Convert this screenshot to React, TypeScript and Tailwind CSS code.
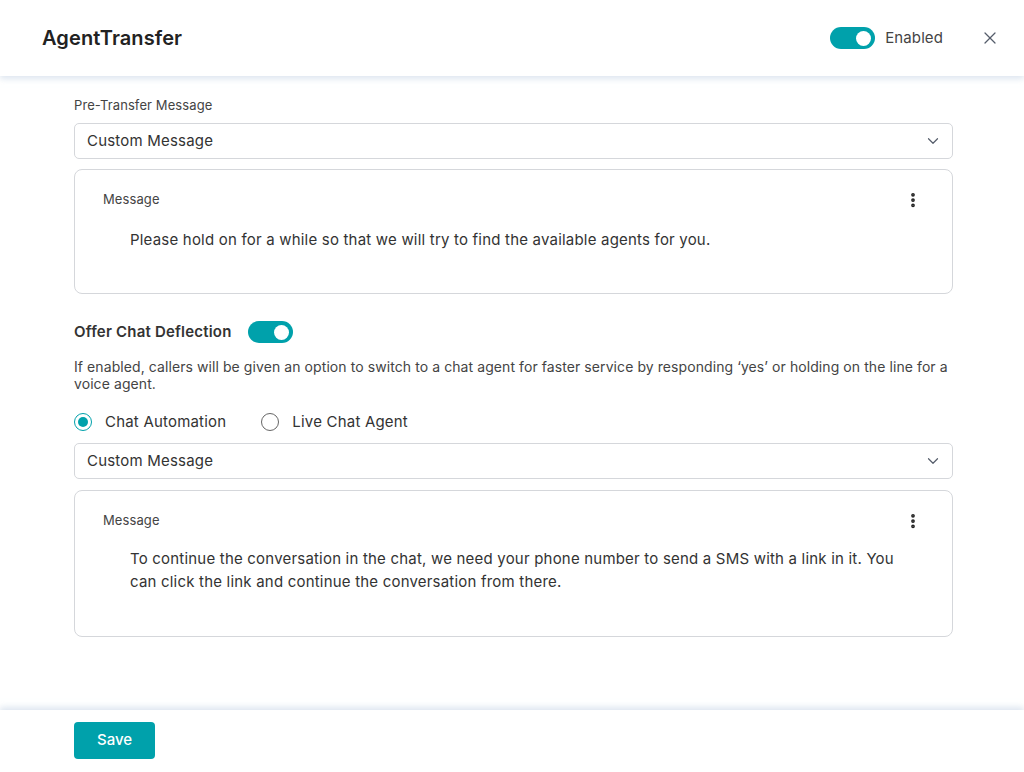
import { X, ChevronDown, EllipsisVertical } from "lucide-react";

const Toggle = () => (
  <div className="w-[45px] h-[22px] rounded-full bg-[#00a1ab] flex items-center justify-end px-[4px]">
    <div className="w-[15px] h-[15px] rounded-full bg-white" />
  </div>
);

const Select = ({ value }: { value: string }) => (
  <div className="h-[36px] border border-[#d5d7db] rounded-[5px] flex items-center justify-between pl-[12px] pr-[10px]">
    <span className="text-[15px] text-[#333] tracking-[0.2px]">{value}</span>
    <ChevronDown className="w-[18px] h-[18px] text-[#555d6b]" strokeWidth={1.6} />
  </div>
);

const MessageCard = ({ text, height, gap }: { text: string; height: string; gap: string }) => (
  <div className={`border border-[#d5d7db] rounded-[8px] pl-[28px] pr-[30px] pt-[20px] ${height}`}>
    <div className="flex items-center justify-between">
      <span className="text-[13px] text-[#444] tracking-[0.1px]">Message</span>
      <EllipsisVertical className="w-[18px] h-[18px] text-[#222]" strokeWidth={3} />
    </div>
    <p className={`${gap} pl-[27px] pr-[10px] text-[15px] leading-[23px] text-[#333] tracking-[0.2px]`}>{text}</p>
  </div>
);

const Radio = ({ label, checked }: { label: string; checked?: boolean }) => (
  <label className="flex items-center gap-[13px]">
    <span
      className={`w-[18px] h-[18px] rounded-full border flex items-center justify-center ${
        checked ? "border-[#00a1ab]" : "border-[#666]"
      }`}
    >
      {checked && <span className="w-[10px] h-[10px] rounded-full bg-[#00a1ab]" />}
    </span>
    <span className="text-[15px] text-[#333] tracking-[0.2px]">{label}</span>
  </label>
);

export default function App() {
  return (
    <div className="h-[772px] w-full flex flex-col bg-white font-['Inter',sans-serif]">
      <header className="h-[76px] shrink-0 flex items-center justify-between pl-[42px] pr-[24px] shadow-[0_3px_6px_rgba(200,214,230,0.6)] relative z-10">
        <h1 className="text-[20px] font-semibold text-[#222] tracking-[0.1px]">AgentTransfer</h1>
        <div className="flex items-center">
          <Toggle />
          <span className="ml-[10px] text-[15px] text-[#444] tracking-[0.1px]">Enabled</span>
          <X className="ml-[37px] w-[20px] h-[20px] text-[#555d6b]" strokeWidth={1.5} />
        </div>
      </header>

      <main className="flex-1 pl-[74px] pr-[71px] pt-[20px]">
        <div className="text-[13px] text-[#444] leading-[18px] tracking-[0.1px]">Pre-Transfer Message</div>
        <div className="mt-[9px]">
          <Select value="Custom Message" />
        </div>
        <div className="mt-[10px]">
          <MessageCard
            height="h-[125px]"
            gap="mt-[18px]"
            text="Please hold on for a while so that we will try to find the available agents for you."
          />
        </div>

        <div className="mt-[27px] flex items-center gap-[16px]">
          <span className="text-[15px] font-semibold text-[#333] tracking-[0.2px]">Offer Chat Deflection</span>
          <Toggle />
        </div>
        <p className="mt-[14px] text-[14px] leading-[17px] text-[#444] tracking-[0.08px]">
          If enabled, callers will be given an option to switch to a chat agent for faster service by
          responding ‘yes’ or holding on the line for a voice agent.
        </p>
        <div className="mt-[19px] flex items-center gap-[35px]">
          <Radio label="Chat Automation" checked />
          <Radio label="Live Chat Agent" />
        </div>
        <div className="mt-[10px]">
          <Select value="Custom Message" />
        </div>
        <div className="mt-[11px]">
          <MessageCard
            height="h-[147px]"
            gap="mt-[16px]"
            text="To continue the conversation in the chat, we need your phone number to send a SMS with a link in it. You can click the link and continue the conversation from there."
          />
        </div>
      </main>

      <footer className="h-[62px] shrink-0 flex items-start pl-[74px] pt-[12px] shadow-[0_-3px_6px_rgba(200,214,230,0.6)]">
        <button className="w-[81px] h-[37px] rounded-[4px] bg-[#00a1ab] text-white text-[15px] font-medium">
          Save
        </button>
      </footer>
    </div>
  );
}
